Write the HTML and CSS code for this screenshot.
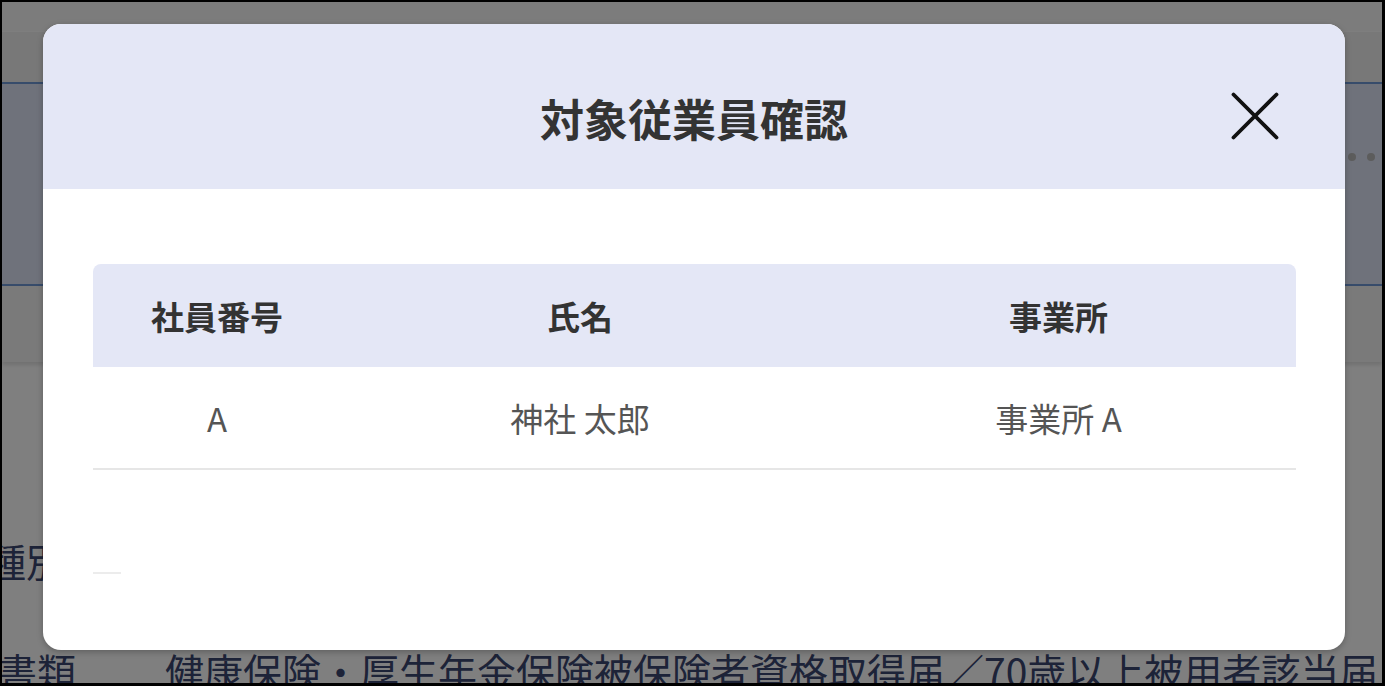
FILE: index.html
```html
<!DOCTYPE html>
<html lang="ja">
<head>
<meta charset="utf-8">
<title>対象従業員確認</title>
<link rel="stylesheet" href="styles.css">
</head>
<body>
<div class="frame">
  <div class="page">
    <div class="topbar"></div>
    <div class="subbar"></div>
    <div class="panel">
      <div class="dots"><span></span><span></span><span></span></div>
    </div>
    <div class="strip"></div>
    <div class="content">
      <div class="field-label">種別</div>
      <div class="doc-row">
        <span class="doc-label">書類</span>
        <span class="doc-value">健康保険・厚生年金保険被保険者資格取得届／70歳以上被用者該当届</span>
      </div>
    </div>
  </div>

  <div class="overlay">
    <div class="modal">
      <div class="modal-header">
        <h1 class="modal-title">対象従業員確認</h1>
        <button class="close-btn" aria-label="閉じる">
          <svg width="48" height="48" viewBox="0 0 48 48">
            <path d="M2.5 2.5 L45.5 45.5 M45.5 2.5 L2.5 45.5" stroke="#111" stroke-width="3.8" stroke-linecap="round" fill="none"/>
          </svg>
        </button>
      </div>
      <div class="modal-body">
        <div class="table">
          <div class="thead">
            <div class="cell c1">社員番号</div>
            <div class="cell c2">氏名</div>
            <div class="cell c3">事業所</div>
          </div>
          <div class="trow">
            <div class="cell c1">A</div>
            <div class="cell c2">神社 太郎</div>
            <div class="cell c3">事業所 A</div>
          </div>
        </div>
        <div class="pager-line"></div>
      </div>
    </div>
  </div>
</div>
</body>
</html>
```

FILE: styles.css
```css
* { box-sizing: border-box; }

html, body {
  margin: 0;
  padding: 0;
  width: 1385px;
  height: 686px;
  overflow: hidden;
  font-family: "Noto Sans CJK JP", "Noto Sans", sans-serif;
}

.frame {
  position: relative;
  width: 1385px;
  height: 686px;
  border: 2px solid #000;
  border-right-width: 3px;
  border-bottom-width: 3px;
  background: #fff;
  overflow: hidden;
}

/* underlying page */
.page {
  display: flex;
  flex-direction: column;
  height: 100%;
}

.page > * { flex-shrink: 0; }

.topbar {
  height: 30px;
  background: #f8f8f8;
  border-bottom: 1px solid #fdfdfd;
}

.subbar {
  height: 52px;
  background: #f1f1f1;
  border-bottom: 2px solid #6f98d6;
}

.panel {
  height: 202px;
  background: #dfe4f6;
  border-bottom: 2px solid #6f98d6;
  display: flex;
  justify-content: flex-end;
  padding: 69px 7px 0 0;
}

.dots {
  display: flex;
  gap: 11px;
  height: 8px;
}

.dots span {
  width: 8px;
  height: 8px;
  border-radius: 50%;
  background: #b8b8b8;
}

.strip {
  height: 76px;
  background: #f5f5f5;
  box-shadow: 0 3px 4px rgba(0,0,0,0.12);
}

.content {
  padding-left: 0;
  color: #3a4670;
  font-size: 39px;
}

.field-label {
  margin-top: 170px;
  margin-left: -15px;
  line-height: 56px;
}

.doc-row {
  display: flex;
  margin-top: 54px;
  line-height: 56px;
  white-space: nowrap;
}

.doc-label {
  margin-left: -4px;
  width: 167px;
}

/* overlay + modal */
.overlay {
  position: absolute;
  inset: 0;
  background: rgba(0, 0, 0, 0.5);
  display: flex;
  align-items: flex-start;
  justify-content: flex-start;
  padding: 22px 0 0 41px;
}

.modal {
  width: 1302px;
  height: 626px;
  background: #fff;
  border-radius: 18px;
  overflow: hidden;
  box-shadow: 0 2px 6px rgba(0,0,0,0.25);
  display: flex;
  flex-direction: column;
}

.modal-header {
  position: relative;
  height: 165px;
  flex-shrink: 0;
  background: #e4e7f6;
  display: flex;
  justify-content: center;
  padding-top: 62px;
}

.modal-title {
  margin: 0;
  font-size: 44px;
  line-height: 64px;
  font-weight: 700;
  color: #333;
  letter-spacing: 0;
}

.close-btn {
  position: absolute;
  top: 68px;
  right: 66px;
  width: 48px;
  height: 48px;
  padding: 0;
  border: none;
  background: transparent;
  display: flex;
}

.modal-body {
  padding: 75px 49px 0 50px;
}

.table {
  display: flex;
  flex-direction: column;
}

.thead, .trow {
  display: grid;
  grid-template-columns: 248px 478px 1fr;
  height: 103px;
}

.thead {
  background: #e4e7f6;
  border-radius: 8px 8px 0 0;
}

.trow {
  border-bottom: 2px solid #e6e6e6;
}

.cell {
  display: flex;
  align-items: center;
  justify-content: center;
  font-size: 33px;
  line-height: 48px;
}

.thead .cell {
  font-weight: 700;
  color: #333;
}

.trow .cell {
  font-weight: 400;
  color: #555;
}

.c3 { padding-left: 2px; }

.pager-line {
  margin-top: 102px;
  width: 28px;
  height: 2px;
  background: #ececec;
}
```
